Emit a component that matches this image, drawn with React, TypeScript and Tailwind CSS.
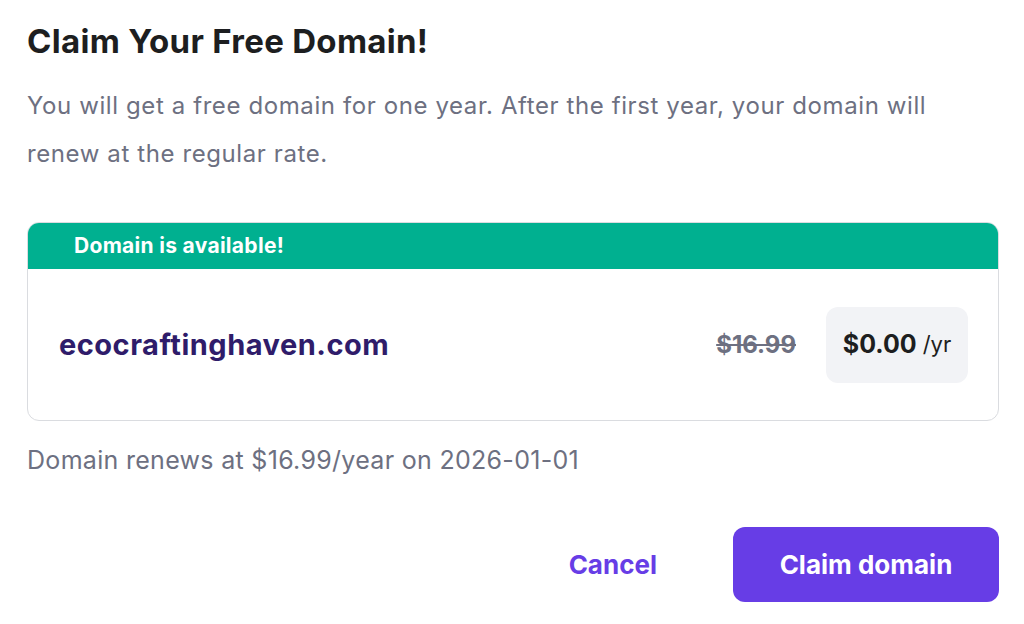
import React from "react";

export default function App() {
  return (
    <div className="w-[1024px] h-[624px] bg-white overflow-hidden font-['Inter',sans-serif]">
      <div className="pl-[27px] pr-[25px] pt-[22px]">
        <h1 className="text-[33px] leading-[38px] font-bold text-[#1d1e20] tracking-[0.3px]">
          Claim Your Free Domain!
        </h1>
        <p className="mt-[22px] text-[24px] leading-[48px] text-[#6d7081] w-[945px] tracking-[0.6px]">
          You will get a free domain for one year. After the first year, your domain will renew at the regular rate.
        </p>
        <div className="mt-[44px] w-[972px] h-[199px] rounded-[12px] border-[1.5px] border-[#dadce0] overflow-hidden flex flex-col">
          <div className="h-[46px] bg-[#00b090] flex items-center pl-[46px]">
            <span className="text-white font-bold text-[21px] tracking-[0.3px]">Domain is available!</span>
          </div>
          <div className="flex-1 flex items-center pl-[31px] pr-[30px]">
            <span className="text-[#2f1c6a] font-bold text-[29px] tracking-[0.5px]">ecocraftinghaven.com</span>
            <span className="ml-auto text-[24px] font-bold text-[#6d7081] line-through">$16.99</span>
            <div className="ml-[30px] w-[142px] h-[76px] rounded-[12px] bg-[#f2f3f6] flex items-center justify-center">
              <span className="text-[25px] font-bold text-[#1d1e20]">$0.00</span>
              <span className="ml-[6px] text-[22px] text-[#1d1e20]">/yr</span>
            </div>
          </div>
        </div>
        <p className="mt-[22px] text-[25px] leading-[34px] text-[#6d7081] tracking-[0.3px]">
          Domain renews at $16.99/year on 2026-01-01
        </p>
        <div className="mt-[50px] flex justify-end items-center">
          <button className="text-[#673de6] font-bold text-[26px] mr-[76px]">Cancel</button>
          <button className="w-[266px] h-[75px] rounded-[12px] bg-[#673de6] text-white font-bold text-[26px]">
            Claim domain
          </button>
        </div>
      </div>
    </div>
  );
}
